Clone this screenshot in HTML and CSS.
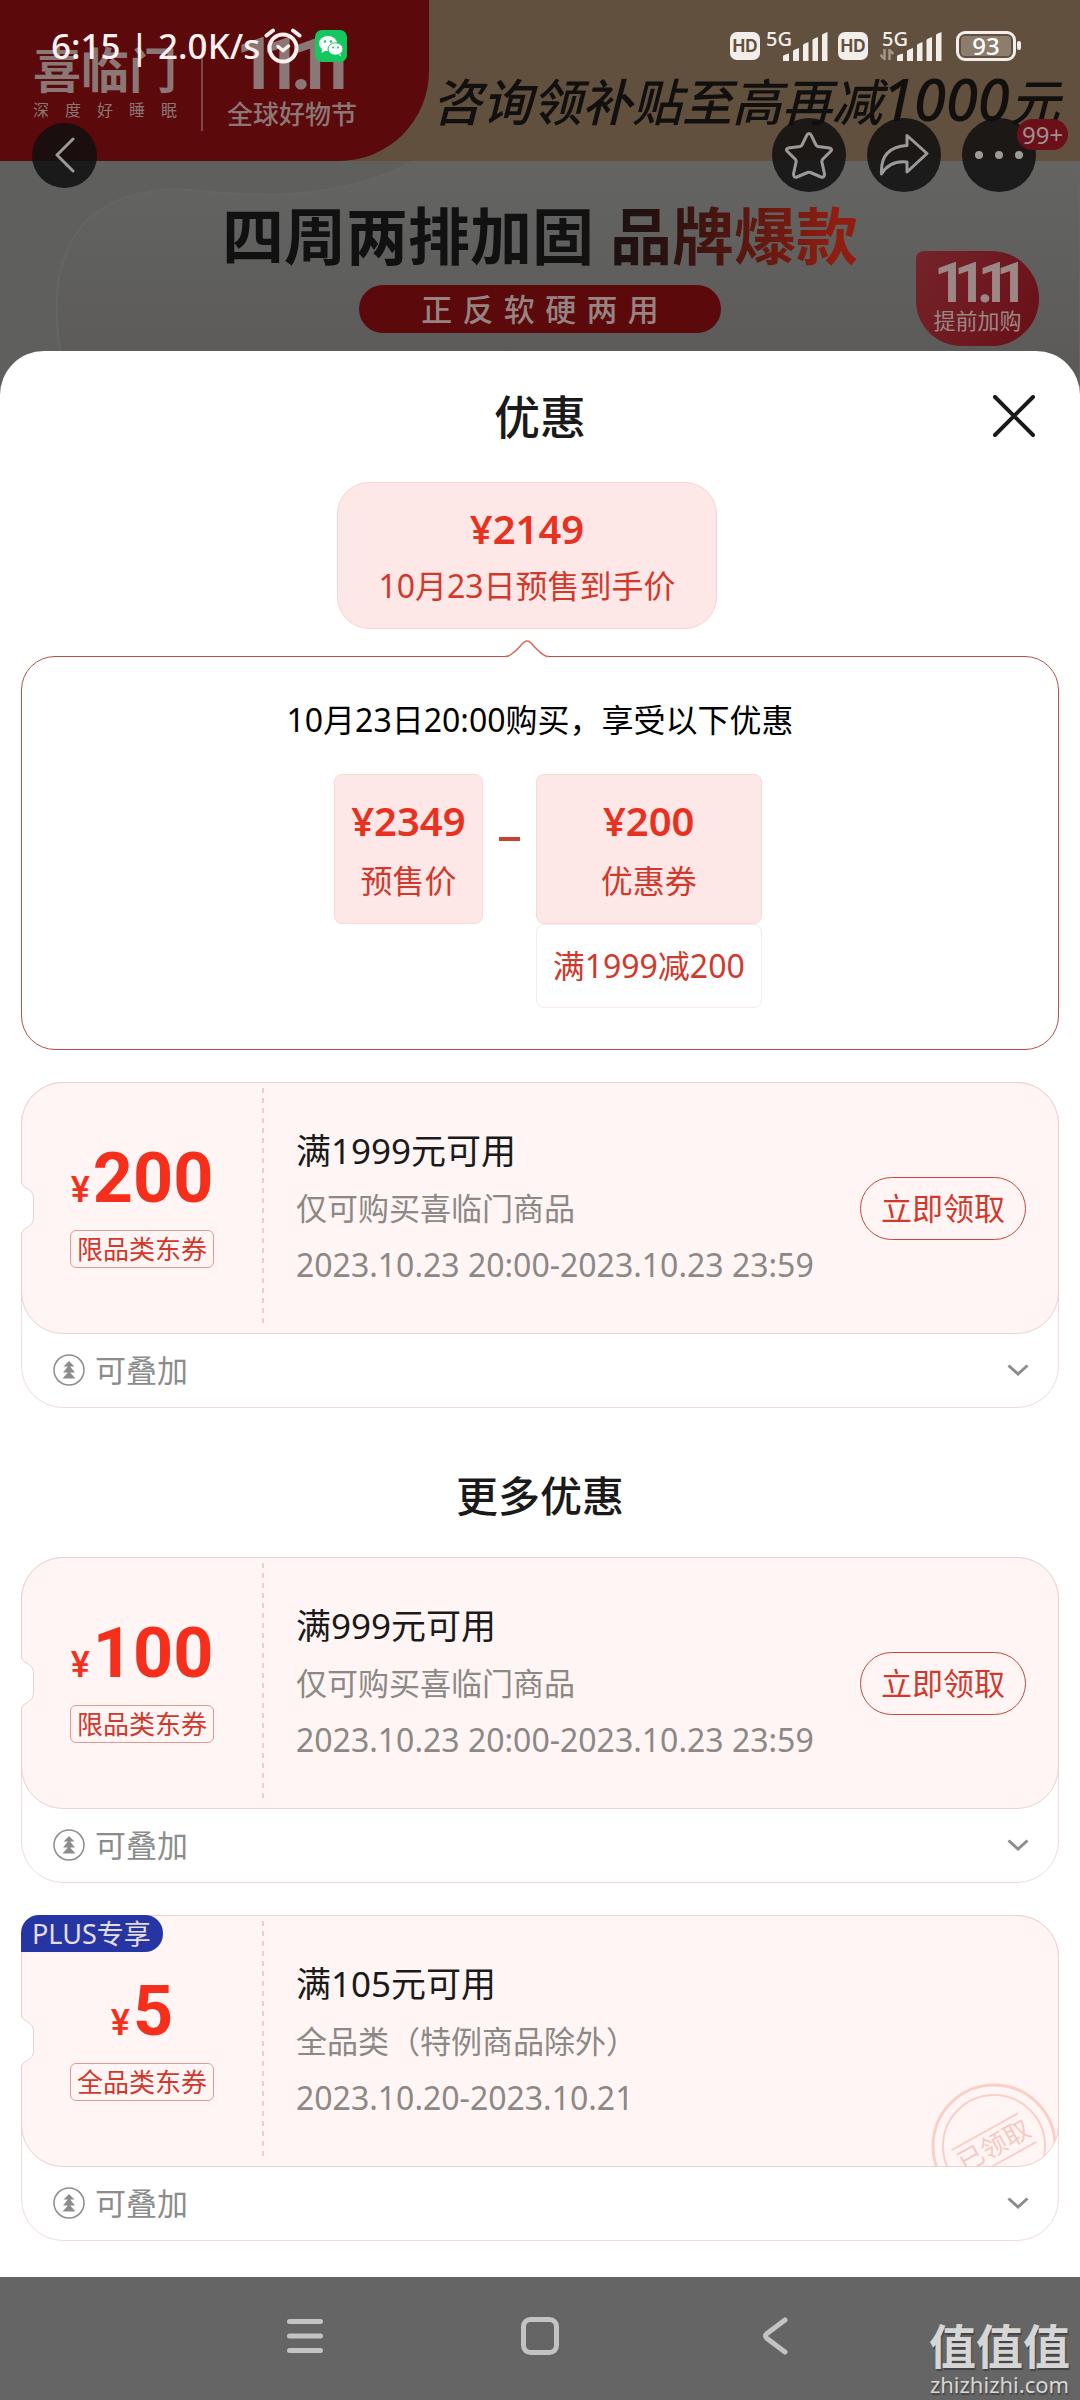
FILE: index.html
```html
<!DOCTYPE html>
<html lang="zh-CN">
<head>
<meta charset="utf-8">
<meta name="viewport" content="width=device-width, initial-scale=1">
<title>优惠</title>
<link rel="stylesheet" href="styles.css">
</head>
<body>
<svg class="defs" aria-hidden="true">
  <symbol id="notch" viewBox="0 0 14 52">
    <path class="notch-fill" d="M0 0 V1 Q2 5 7 7 Q12.500 10 12.500 15 V37 Q12.500 42 7 45 Q2 47 0 51 V52 Z"/>
    <path class="notch-line" d="M.5 0 V1 Q2 5 7 7 Q12.500 10 12.500 15 V37 Q12.500 42 7 45 Q2 47 .5 51 V52"/>
  </symbol>
  <symbol id="stack" viewBox="0 0 32 32">
    <circle cx="16" cy="16" r="15" fill="none" stroke="currentColor" stroke-width="1.500"/>
    <path fill="currentColor" d="M16 7 L21.500 12.500 H17.500 V13 L22 18.500 H17.500 V19 L22.500 24.500 H9.500 L14.500 19 V18.500 H10 L14.500 13 V12.500 H10.500 Z"/>
  </symbol>
  <symbol id="chevron" viewBox="0 0 24 14">
    <path d="M2.500 2.500 L12 11 L21.500 2.500" fill="none" stroke="currentColor" stroke-width="3"/>
  </symbol>
  <symbol id="bars" viewBox="0 0 45 29">
    <path fill="currentColor" d="M0 24 Q0 23 6 21.500 V29 H0 Z M10 19 Q10 18 16 16 V29 H10 Z M20 13 Q20 12 25.500 10 V29 H20 Z M29.500 8 Q29.500 7 35 5 V29 H29.500 Z M39 3 Q39 2 44.500 0 V29 H39 Z"/>
  </symbol>
</svg>

<header class="hero">
  <div class="promo">
    <div class="brand">
      <div class="brand-col">
        <strong class="brand-name">喜临门</strong>
        <span class="brand-sub">深　度　好　睡　眠</span>
      </div>
      <div class="brand-col brand-fest">
        <svg class="fest-mark" viewBox="0 0 84 44" role="img" aria-label="11.11"><text x="-2 18 41 42 60" y="42">11.11</text></svg>
        <span class="fest-name">全球好物节</span>
      </div>
    </div>
    <p class="slogan">咨询领补贴至高再减<span class="slogan-num">1000</span>元</p>
  </div>
  <div class="stage">
    <svg class="stage-bg" viewBox="0 0 1080 240" preserveAspectRatio="none" aria-hidden="true">
      <defs>
        <linearGradient id="blob" x1="0" y1="0" x2="0" y2="1"><stop offset="0" stop-color="#646463"/><stop offset="1" stop-color="#5a5958"/></linearGradient>
      </defs>
      <path d="M72 240 C40 130 50 30 180 28 C270 38 340 38 415 0 H1080 V240 Z" fill="url(#blob)" stroke="#656563" stroke-width="2"/>
    </svg>
    <h2 class="stage-title">四周两排加固 品牌爆款</h2>
    <p class="stage-pill">正&emsp13;反&emsp13;软&emsp13;硬&emsp13;两&emsp13;用</p>
    <div class="stage-badge">
      <svg class="badge-mark" viewBox="0 0 84 44" role="img" aria-label="11.11"><text x="-2 18 41 42 60" y="42">11.11</text></svg>
      <span>提前加购</span>
    </div>
  </div>

  <div class="status">
    <div class="status-side">
      <span class="clock">6:15 | 2.0K/s</span>
      <svg class="ic-alarm" viewBox="0 0 38 36" aria-hidden="true"><g fill="none" stroke="#fdf0f0" stroke-linecap="round"><circle cx="19" cy="20" r="13.500" stroke-width="4"/><path d="M2.500 7.500 L9 2.500 M29 2.500 L35.500 7.500" stroke-width="4"/><path d="M14 18.500 L19 22.500 L24.500 18" stroke-width="3.500"/></g></svg>
      <svg class="ic-wechat" viewBox="0 0 32 32" aria-hidden="true"><rect width="32" height="32" rx="7" fill="#14c75f"/><ellipse cx="13" cy="13.500" rx="9" ry="7.500" fill="#fff"/><path d="M7 18 L6.500 23 L12 20 Z M25 22 L26 26 L21 24 Z" fill="#fff"/><ellipse cx="20.500" cy="19" rx="7.500" ry="6.200" fill="#fff" stroke="#14c75f"/><g fill="#14c75f"><circle cx="10" cy="11.500" r="1.200"/><circle cx="16" cy="11.500" r="1.200"/><circle cx="18" cy="17.500" r="1"/><circle cx="23" cy="17.500" r="1"/></g></svg>
    </div>
    <div class="status-side status-right">
      <span class="hd">HD</span>
      <span class="signal"><b>5G</b><svg class="ic-bars"><use href="#bars"/></svg></span>
      <span class="hd">HD</span>
      <span class="signal signal-data"><b>5G</b><svg class="ic-data" viewBox="0 0 14 11" aria-hidden="true"><path d="M4.500 0 V10 L0.500 6 M9.500 11 V1 L13.500 5" fill="none" stroke="#a39584" stroke-width="2.500"/></svg><svg class="ic-bars"><use href="#bars"/></svg></span>
      <span class="battery">93</span>
    </div>
  </div>

  <nav class="tools" aria-label="页面操作">
    <button class="round round-back" aria-label="返回"><svg viewBox="0 0 20 36" width="20" height="36"><path d="M18 2 L2 18 L18 34" fill="none" stroke="#9c9a99" stroke-width="3" stroke-linecap="round" stroke-linejoin="round"/></svg></button>
    <div class="tools-right">
      <button class="round" aria-label="收藏"><svg viewBox="0 0 50 48" width="50" height="48"><path d="M25 2.500 Q26.500 2.500 27.300 4.500 L32 14 Q32.500 15 34 15.500 L45.500 17 Q49 18 46.500 20.500 L38.500 28.500 Q37.500 30 38 31.500 L40.500 43 Q40.500 47 37 46 L26.500 41.500 Q25 41 23.500 41.500 L13 46 Q9.500 47 9.500 43 L12 31.500 Q12.500 30 11.500 28.500 L3.500 20.500 Q1 18 4.500 17 L16 15.500 Q17.500 15 18 14 L22.700 4.500 Q23.500 2.500 25 2.500 Z" fill="none" stroke="#9c9a99" stroke-width="3"/></svg></button>
      <button class="round" aria-label="分享"><svg viewBox="0 0 50 44" width="50" height="44"><path d="M28 2.500 L48 20.500 L28 39 V29 Q11 27 2.500 41 Q1 14 28 12.500 Z" fill="none" stroke="#9c9a99" stroke-width="3" stroke-linejoin="round"/></svg></button>
      <button class="round" aria-label="更多"><svg viewBox="0 0 50 10" width="50" height="10" fill="#9c9a99"><circle cx="5" cy="5" r="4"/><circle cx="25" cy="5" r="4"/><circle cx="45" cy="5" r="4"/></svg><span class="count">99+</span></button>
    </div>
  </nav>
</header>

<main class="sheet">
  <div class="sheet-head">
    <h1 class="sheet-title">优惠</h1>
    <button class="close" aria-label="关闭"><svg viewBox="0 0 42 42" width="42" height="42"><path d="M2 2 L40 40 M40 2 L2 40" stroke="#1a1a1a" stroke-width="4" stroke-linecap="round"/></svg></button>
  </div>

  <div class="final">
    <div class="final-chip">
      <strong class="price">¥2149</strong>
      <span class="label">10月23日预售到手价</span>
    </div>
  </div>

  <section class="formula">
    <svg class="formula-tip" viewBox="0 0 44 18" aria-hidden="true"><path d="M0 18 V17 H2 Q7 16 18 3 Q22 -1 26 3 Q37 16 42 17 H44 V18 Z" fill="#fff"/><path d="M0 16.500 H1 Q7 16 18 3 Q22 -1 26 3 Q37 16 43 16.500 H44" fill="none" stroke="#d9685c" stroke-width="1.500"/></svg>
    <p class="formula-note">10月23日20:00购买，享受以下优惠</p>
    <div class="formula-row">
      <div class="term"><strong class="price">¥2349</strong><span class="label">预售价</span></div>
      <span class="minus" role="img" aria-label="减"></span>
      <div class="term-stack">
        <div class="term"><strong class="price">¥200</strong><span class="label">优惠券</span></div>
        <div class="term-rule label">满1999减200</div>
      </div>
    </div>
  </section>

  <article class="coupon">
    <div class="ticket">
      <svg class="notch"><use href="#notch"/></svg>
      <div class="worth"><div class="amount"><span class="yen">¥</span>200</div><span class="kind">限品类东券</span></div>
      <div class="info">
        <div class="detail"><h3>满1999元可用</h3><p>仅可购买喜临门商品</p><p class="dates">2023.10.23 20:00-2023.10.23 23:59</p></div>
        <button class="claim">立即领取</button>
      </div>
    </div>
    <button class="more"><svg class="ic-stack"><use href="#stack"/></svg><span>可叠加</span><svg class="ic-chevron"><use href="#chevron"/></svg></button>
  </article>

  <h2 class="section-title">更多优惠</h2>

  <article class="coupon">
    <div class="ticket">
      <svg class="notch"><use href="#notch"/></svg>
      <div class="worth"><div class="amount"><span class="yen">¥</span>100</div><span class="kind">限品类东券</span></div>
      <div class="info">
        <div class="detail"><h3>满999元可用</h3><p>仅可购买喜临门商品</p><p class="dates">2023.10.23 20:00-2023.10.23 23:59</p></div>
        <button class="claim">立即领取</button>
      </div>
    </div>
    <button class="more"><svg class="ic-stack"><use href="#stack"/></svg><span>可叠加</span><svg class="ic-chevron"><use href="#chevron"/></svg></button>
  </article>

  <article class="coupon">
    <div class="ticket">
      <svg class="notch"><use href="#notch"/></svg>
      <span class="plus">PLUS专享</span>
      <div class="worth"><div class="amount"><span class="yen">¥</span>5</div><span class="kind">全品类东券</span></div>
      <div class="info">
        <div class="detail"><h3>满105元可用</h3><p>全品类（特例商品除外）</p><p class="dates">2023.10.20-2023.10.21</p></div>
      </div>
      <div class="stamp-clip">
        <svg class="stamp" viewBox="0 0 126 126"><g fill="none" stroke="#f9cfc8"><circle cx="63" cy="63" r="61" stroke-width="3"/><circle cx="63" cy="63" r="51" stroke-width="2"/><g transform="rotate(-29 63 63)"><path d="M24 46 H100 M26 80 H102" stroke-width="2"/></g></g><text x="63" y="72" text-anchor="middle" transform="rotate(-29 63 63)">已领取</text></svg>
      </div>
    </div>
    <button class="more"><svg class="ic-stack"><use href="#stack"/></svg><span>可叠加</span><svg class="ic-chevron"><use href="#chevron"/></svg></button>
  </article>
</main>

<nav class="sysbar" aria-label="系统导航">
  <button aria-label="最近任务"><svg viewBox="0 0 40 40" width="40" height="40"><path d="M4.500 5.500 H35.500 M4.500 20 H35.500 M4.500 34.500 H35.500" stroke="#c3c3c3" stroke-width="5" stroke-linecap="round"/></svg></button>
  <button aria-label="主屏幕"><svg viewBox="0 0 40 40" width="40" height="40"><rect x="3.500" y="3.500" width="33" height="33" rx="7" fill="none" stroke="#c3c3c3" stroke-width="5"/></svg></button>
  <button aria-label="返回上一页"><svg viewBox="0 0 40 40" width="40" height="40"><path d="M30 4 L12 17.500 Q9 20 12 22.500 L30 36" fill="none" stroke="#c3c3c3" stroke-width="5" stroke-linecap="round"/></svg></button>
  <div class="mark"><strong>值值值</strong><span>zhizhizhi.com</span></div>
</nav>
</body>
</html>
```
FILE: styles.css
```css
* {
  box-sizing: border-box;
}

body {
  margin: 0;
  min-height: 100vh;
  display: flex;
  flex-direction: column;
  background: #656565;
  color: #1a1a1a;
  font-family: "Noto Sans", "Noto Sans CJK SC", sans-serif;
  font-size: 32px;
  line-height: 48px;
}

h1, h2, h3, p {
  margin: 0;
  font-weight: 400;
}

button {
  margin: 0;
  padding: 0;
  border: 0;
  background: none;
  color: inherit;
  font: inherit;
}

svg {
  display: block;
  flex: none;
}

.defs {
  position: absolute;
  width: 0;
  height: 0;
}

/* Product banner behind the sheet */
.hero {
  position: relative;
  overflow: hidden;
}

.promo {
  display: flex;
  background: #62503f;
}

.brand {
  flex: none;
  display: flex;
  width: 429px;
  padding: 34px 0 30px 33px;
  border-bottom-right-radius: 90px;
  background: #5b090b;
  color: #8b7876;
}

.brand-col {
  display: flex;
  flex-direction: column;
  width: 170px;
  border-right: 2px solid #7a4a4a;
  white-space: nowrap;
}

.brand-name {
  padding-top: 8px;
  font-size: 48px;
  line-height: 56px;
}

.brand-sub {
  font-size: 16px;
  line-height: 24px;
}

.brand-fest {
  width: 178px;
  border: 0;
  align-items: center;
}

.fest-mark {
  width: 108px;
  height: 58px;
}

.fest-mark text,
.badge-mark text {
  fill: currentColor;
  font-family: Roboto, sans-serif;
  font-weight: 700;
  font-size: 56px;
}

.fest-name {
  margin-top: 5px;
  font-size: 26px;
  font-weight: 500;
  line-height: 34px;
}

.slogan {
  padding: 70px 0 0 3px;
  color: #12100e;
  font-size: 50px;
  font-weight: 500;
  font-style: italic;
  line-height: 64px;
  white-space: nowrap;
}

.slogan-num {
  font-size: 58px;
  line-height: 48px;
}

.stage {
  position: relative;
  display: flex;
  flex-direction: column;
  align-items: center;
  padding: 38px 0 68px;
  background: #5f5f5d;
}

.stage-bg {
  position: absolute;
  inset: 0;
  width: 100%;
  height: 100%;
}

.stage-title {
  position: relative;
  background: linear-gradient(90deg, #111 55%, #2a1210 70%, #8f1d10 96%);
  background-clip: text;
  color: transparent;
  font-size: 62px;
  font-weight: 700;
  line-height: 74px;
}

.stage-pill {
  position: relative;
  margin-top: 12px;
  padding: 0 62px;
  border-radius: 24px;
  background: #5b090b;
  color: #958482;
  font-size: 31px;
  font-weight: 500;
}

.stage-badge {
  position: absolute;
  top: 90px;
  right: 41px;
  display: flex;
  flex-direction: column;
  align-items: center;
  width: 123px;
  height: 95px;
  padding-top: 9px;
  border-radius: 8px 48px 48px 46px;
  background: linear-gradient(120deg, #74242a, #690f16);
  color: #9b8886;
  font-size: 22px;
  line-height: 32px;
}

.badge-mark {
  width: 84px;
  height: 44px;
}

/* Phone status bar */
.status {
  position: absolute;
  top: 22px;
  left: 0;
  right: 0;
  display: flex;
  justify-content: space-between;
  padding: 0 64px 0 51px;
  color: #fdf0f0;
}

.status-side {
  display: flex;
  align-items: center;
}

.clock {
  font-size: 35px;
  font-weight: 500;
}

.ic-alarm {
  width: 38px;
  height: 36px;
  margin-left: 4px;
}

.ic-wechat {
  width: 32px;
  height: 32px;
  margin-left: 13px;
}

.status-right {
  gap: 10px;
  color: #f3eeea;
}

.hd {
  width: 30px;
  border-radius: 7px;
  background: #f3eeea;
  color: #62503f;
  font-family: Inter, sans-serif;
  font-size: 17px;
  font-weight: 700;
  line-height: 28px;
  text-align: center;
}

.signal {
  position: relative;
  width: 58px;
  height: 34px;
}

.signal-data {
  width: 64px;
}

.signal b {
  position: absolute;
  top: 0;
  left: -4px;
  font-size: 20px;
  font-weight: 500;
  line-height: 20px;
}

.signal-data b {
  left: 4px;
}

.ic-bars {
  position: absolute;
  right: 0;
  bottom: 2px;
  width: 45px;
  height: 29px;
}

.ic-data {
  position: absolute;
  left: 2px;
  bottom: 3px;
  width: 14px;
  height: 11px;
}

.battery {
  position: relative;
  width: 60px;
  margin-left: 4px;
  border: 3px solid #f3eeea;
  border-radius: 9px;
  background: #8d7d6c content-box;
  padding: 2px;
  color: #fff;
  font-size: 24px;
  font-weight: 500;
  line-height: 20px;
  text-align: center;
}

.battery::after {
  content: "";
  position: absolute;
  top: 7px;
  right: -8px;
  width: 4px;
  height: 9px;
  border-radius: 2px;
  background: #f3eeea;
}

/* Floating page buttons */
.tools {
  position: absolute;
  top: 118px;
  left: 0;
  right: 0;
  display: flex;
  align-items: center;
  justify-content: space-between;
  padding: 0 44px 0 32px;
}

.tools-right {
  display: flex;
  gap: 21px;
}

.round {
  position: relative;
  display: flex;
  align-items: center;
  justify-content: center;
  width: 74px;
  height: 74px;
  border-radius: 50%;
  background: rgba(16, 15, 15, 0.86);
}

.round-back {
  width: 65px;
  height: 65px;
}

.count {
  position: absolute;
  top: 1px;
  left: 55px;
  padding: 0 5px;
  border-radius: 16px;
  background: #6b1018;
  color: #a08f8e;
  font-size: 24px;
  line-height: 31px;
}

/* Sheet */
.sheet {
  position: relative;
  flex: 1;
  margin-top: -50px;
  padding: 35px 21px 36px;
  border-radius: 44px 44px 0 0;
  background: #fff;
}

.sheet-head {
  display: grid;
  grid-template-columns: 1fr auto 1fr;
  align-items: center;
}

.sheet-title {
  grid-column: 2;
  font-size: 46px;
  font-weight: 500;
  line-height: 60px;
}

.close {
  justify-self: end;
  margin-right: 24px;
}

.final {
  display: flex;
  justify-content: center;
  margin-top: 36px;
  padding-right: 26px;
}

.final-chip {
  display: flex;
  flex-direction: column;
  align-items: center;
  gap: 9px;
  padding: 22px 40px 18px;
  border: 1px solid #f5d5d3;
  border-radius: 32px;
  background: #fde8e7;
}

.price {
  color: #e9311f;
  font-size: 40px;
  font-weight: 600;
}

.label {
  color: #d0392c;
}

.formula {
  position: relative;
  margin-top: 27px;
  padding: 39px 0 41px;
  border: 1px solid #b8504a;
  border-radius: 34px;
  text-align: center;
}

.formula-tip {
  position: absolute;
  top: -17px;
  left: calc(50% - 35px);
  width: 44px;
  height: 18px;
}

.formula-note {
  color: #000;
}

.formula-row {
  display: flex;
  justify-content: center;
  gap: 16px;
  margin-top: 30px;
  padding-left: 16px;
}

.term {
  display: flex;
  flex-direction: column;
  align-items: center;
  gap: 12px;
  height: 150px;
  padding: 22px 16px 0;
  border: 1px solid #f8d9d6;
  border-radius: 8px;
  background: #fde8e7;
}

.minus {
  width: 21px;
  height: 4px;
  margin-top: 63px;
  background: #c8432f;
}

.term-rule {
  padding: 17px 16px;
  border: 1px solid #f8eae8;
  border-radius: 8px;
}

/* Coupons */
.coupon {
  margin-top: 32px;
  border: 1px solid #efdcdc;
  border-radius: 42px;
}

.ticket {
  position: relative;
  display: flex;
  height: 252px;
  margin: -1px;
  border: 1px solid #ecd0ce;
  border-radius: 42px;
  background: #fff5f4;
}

.notch {
  position: absolute;
  top: 99px;
  left: -1px;
  width: 14px;
  height: 52px;
}

.notch-fill {
  fill: #fff;
}

.notch-line {
  fill: none;
  stroke: #ecd0ce;
}

.worth {
  display: flex;
  flex-direction: column;
  align-items: center;
  justify-content: center;
  gap: 10px;
  width: 240px;
}

.amount {
  display: flex;
  align-items: baseline;
  gap: 3px;
  color: #f62e1c;
  font-family: Roboto, sans-serif;
  font-size: 70px;
  font-weight: 700;
  line-height: 60px;
}

.yen {
  font-size: 36px;
  font-weight: 500;
}

.kind {
  padding: 0 6px;
  border: 1px solid #e39a92;
  border-radius: 6px;
  color: #d0392c;
  font-size: 26px;
  line-height: 36px;
}

.info {
  flex: 1;
  display: flex;
  align-items: center;
  justify-content: space-between;
  margin: 5px 0;
  padding: 0 32px 0 34px;
  background: repeating-linear-gradient(#f0cccc 0 5px, transparent 5px 10px) left / 2px 100% no-repeat;
}

.detail {
  display: flex;
  flex-direction: column;
  gap: 9px;
  color: #8c8886;
}

.detail h3 {
  color: #1a1a1a;
  font-size: 35px;
}

.detail p {
  font-size: 31px;
}

.detail .dates {
  font-size: 32px;
}

.claim {
  width: 166px;
  border: 1px solid #c4473d;
  border-radius: 32px;
  color: #d0392c;
  font-size: 31px;
  line-height: 61px;
}

.more {
  display: flex;
  align-items: center;
  width: 100%;
  padding: 13px 28px 13px 31px;
  color: #8c8c8c;
  font-size: 31px;
}

.ic-stack {
  width: 32px;
  height: 32px;
  margin-right: 10px;
}

.ic-chevron {
  width: 24px;
  height: 14px;
  margin-left: auto;
}

.plus {
  position: absolute;
  top: -1px;
  left: -1px;
  padding: 0 12px 0 11px;
  border-radius: 18px 18px 18px 0;
  background: #2536a4;
  color: #e6dde0;
  font-size: 27px;
  line-height: 37px;
}

.stamp-clip {
  position: absolute;
  inset: 0;
  overflow: hidden;
  border-radius: 41px;
  pointer-events: none;
}

.stamp {
  position: absolute;
  right: 1px;
  bottom: -43px;
  width: 126px;
  height: 126px;
}

.stamp text {
  fill: #f7c9c2;
  font-size: 26px;
}

.section-title {
  margin: 58px 0 -1px;
  font-size: 42px;
  font-weight: 500;
  line-height: 60px;
  text-align: center;
}

/* System navigation */
.sysbar {
  position: relative;
  display: flex;
  justify-content: center;
  gap: 195px;
  padding: 39px 0 45px;
}

.mark {
  position: absolute;
  right: 10px;
  bottom: 4px;
  display: flex;
  flex-direction: column;
  align-items: center;
  color: #d6d6d6;
  text-shadow: 1px 2px 1px #444;
}

.mark strong {
  font-size: 47px;
  line-height: 50px;
}

.mark span {
  font-size: 22px;
  line-height: 26px;
}
```
